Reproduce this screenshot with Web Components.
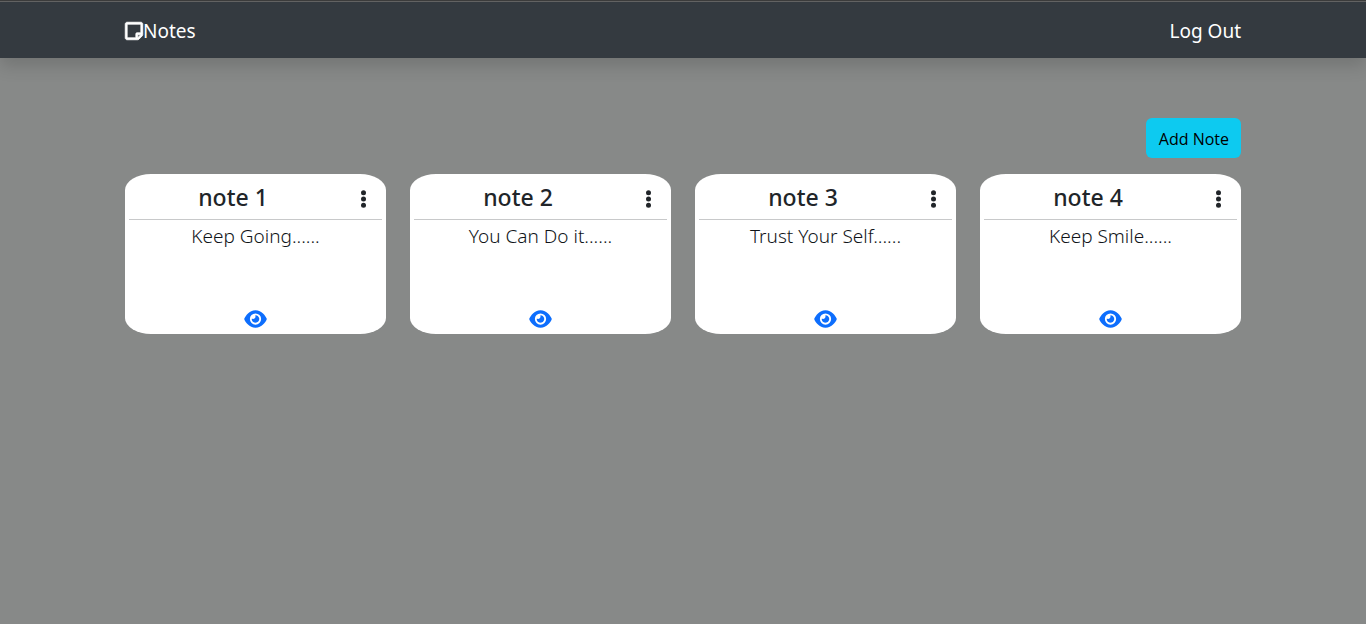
<!DOCTYPE html>
<html lang="en">
<head>
<meta charset="utf-8">
<meta name="viewport" content="width=device-width, initial-scale=1">
<title>Notes</title>
<style>
  body { margin: 0; min-height: 100vh; background: #878988; color: #212529; font: 400 16px/24px "Open Sans", "Noto Sans", sans-serif; }
</style>
</head>
<body>
<notes-app></notes-app>

<template id="app-tpl">
  <style>
    :host { display: block; }
    main { box-sizing: border-box; max-width: 1140px; margin: 0 auto; padding: 60px 12px 24px; }
    .tools { display: flex; justify-content: flex-end; margin-bottom: 16px; }
    .grid { display: grid; grid-template-columns: repeat(auto-fill, minmax(240px, 1fr)); gap: 24px; }
    button { font: inherit; font-size: 16px; line-height: 24px; color: #000; background: #0dcaf0; border: 0; border-radius: 6px; padding: 9px 12px 7px 13px; cursor: pointer; }
  </style>
  <notes-navbar></notes-navbar>
  <main>
    <div class="tools"><button type="button">Add Note</button></div>
    <div class="grid">
      <note-card><span slot="title">note 1</span>Keep Going......</note-card>
      <note-card><span slot="title">note 2</span>You Can Do it......</note-card>
      <note-card><span slot="title">note 3</span>Trust Your Self......</note-card>
      <note-card><span slot="title">note 4</span>Keep Smile......</note-card>
    </div>
  </main>
</template>

<template id="navbar-tpl">
  <style>
    :host { display: block; background: #343a40; border-top: 1px solid #3b3b3b; box-shadow: 0 8px 16px rgba(0, 0, 0, .15); }
    .edge { border-top: 1px solid #626262; }
    nav { box-sizing: border-box; max-width: 1140px; margin: 0 auto; padding: 14px 12px 12px; display: flex; justify-content: space-between; align-items: center; }
    a { display: flex; align-items: center; color: #fff; text-decoration: none; font-family: "Noto Sans", "Open Sans", sans-serif; font-size: 19px; line-height: 30px; }
    svg { width: 18px; height: 20px; fill: currentColor; stroke: currentColor; stroke-width: 22; overflow: visible; }
  </style>
  <div class="edge">
    <nav>
      <a href="#home"><svg viewBox="0 0 448 512" aria-hidden="true"><path d="M448 348.106V80c0-26.51-21.49-48-48-48H48C21.49 32 0 53.49 0 80v351.988c0 26.51 21.49 48 48 48h268.118a48 48 0 0 0 33.941-14.059l83.882-83.882A48 48 0 0 0 448 348.106zm-128 80v-76.118h76.118L320 428.106zM400 80v223.988H296c-13.255 0-24 10.745-24 24v104H48V80h352z"/></svg>Notes</a>
      <a href="#logout">Log Out</a>
    </nav>
  </div>
</template>

<template id="card-tpl">
  <style>
    :host { display: flex; flex-direction: column; box-sizing: border-box; min-height: 160px; padding: 4px; background: #fff; border-radius: 10%; text-align: center; font-family: "Noto Sans", "Open Sans", sans-serif; }
    header { display: flex; align-items: center; height: 41px; border-bottom: 1px solid #c8c9ca; }
    h2 { flex: 1; margin: 0; padding-bottom: 3px; font-size: 23px; line-height: 28px; font-weight: 500; }
    p { flex: 1; margin: 0; padding-top: 1px; font-size: 19px; line-height: 30px; font-weight: 300; color: #101418; }
    button { display: flex; border: 0; background: none; cursor: pointer; color: inherit; }
    svg { display: block; fill: currentColor; }
    .menu { padding: 1px 16px 0 24px; }
    .menu svg { width: 5px; height: 18px; }
    .view { align-self: center; padding: 0 0 1px; color: #0d6efd; }
    .view svg { width: 23px; height: 20px; }
  </style>
  <header>
    <h2><slot name="title"></slot></h2>
    <button class="menu" type="button" aria-label="Note options"><svg viewBox="0 0 5 18"><circle cx="2.5" cy="2.7" r="2.5"/><circle cx="2.5" cy="9" r="2.5"/><circle cx="2.5" cy="15.3" r="2.5"/></svg></button>
  </header>
  <p><slot></slot></p>
  <button class="view" type="button" aria-label="View note"><svg viewBox="0 0 576 512"><path d="M288 32c-80.800 0-145.500 36.800-192.600 80.600C48.600 156 17.300 208 2.500 243.700c-3.300 7.900-3.300 16.700 0 24.600C17.300 304 48.600 356 95.400 399.400C142.500 443.200 207.200 480 288 480s145.500-36.800 192.600-80.600c46.800-43.500 78.100-95.400 93-131.100c3.300-7.900 3.300-16.700 0-24.600c-14.900-35.700-46.200-87.700-93-131.100C433.500 68.800 368.800 32 288 32zM144 256a144 144 0 1 1 288 0 144 144 0 1 1 -288 0zm144-64c0 35.300-28.700 64-64 64c-7.100 0-13.900-1.200-20.300-3.300c-5.500-1.800-11.900 1.600-11.700 7.400c.3 6.900 1.300 13.800 3.200 20.700c13.700 51.200 66.400 81.600 117.600 67.900s81.600-66.400 67.900-117.600c-11.100-41.500-47.800-69.400-88.600-71.100c-5.800-.2-9.200 6.100-7.400 11.700c2.100 6.400 3.300 13.200 3.300 20.300z"/></svg></button>
</template>

<script>
  const mount = (host, id) =>
    host.attachShadow({ mode: "open" }).append(document.getElementById(id).content.cloneNode(true));

  class NotesNavbar extends HTMLElement {
    constructor() { super(); mount(this, "navbar-tpl"); }
  }
  class NoteCard extends HTMLElement {
    constructor() { super(); mount(this, "card-tpl"); }
  }
  class NotesApp extends HTMLElement {
    constructor() { super(); mount(this, "app-tpl"); }
  }
  customElements.define("notes-navbar", NotesNavbar);
  customElements.define("note-card", NoteCard);
  customElements.define("notes-app", NotesApp);
</script>
</body>
</html>
